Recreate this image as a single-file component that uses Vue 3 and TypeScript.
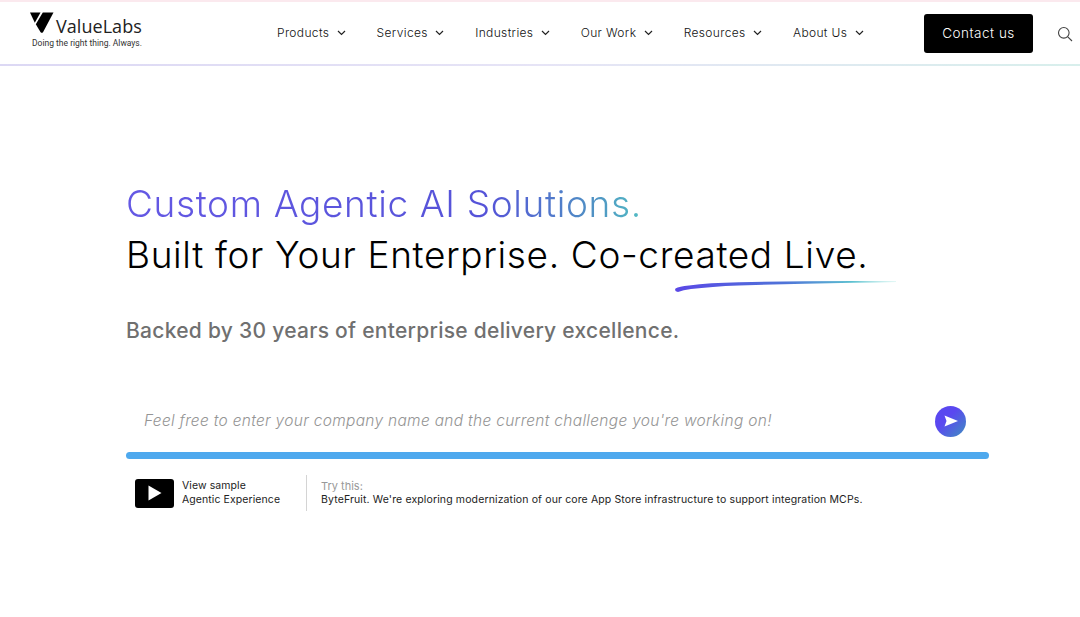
<script setup lang="ts">
const navItems = ["Products", "Services", "Industries", "Our Work", "Resources", "About Us"];
</script>

<template>
  <div class="page">
    <header class="header">
      <div class="logo">
        <div class="logo-top">
          <svg class="logo-mark" width="24" height="22" viewBox="0 0 24 22">
            <path d="M0 0.500H10.500L4.800 10.800z" fill="#000" />
            <path d="M12.800 0.500H23.500L13 20.200q-1.200 1.300-2.400 0L5.800 12.200z" fill="#000" />
          </svg>
          <span class="logo-name">ValueLabs</span>
        </div>
        <div class="logo-tag">Doing the right thing. Always.</div>
      </div>
      <nav class="nav">
        <a v-for="item in navItems" :key="item" class="nav-item">
          {{ item }}
          <svg width="9" height="6" viewBox="0 0 9 6"><path d="M1 1l3.500 3.500L8 1" fill="none" stroke="#222" stroke-width="1.200" /></svg>
        </a>
      </nav>
      <button class="contact">Contact us</button>
      <svg class="search" width="16" height="16" viewBox="0 0 16 16">
        <circle cx="6.800" cy="6.800" r="5.300" fill="none" stroke="#444" stroke-width="1.100" />
        <path d="M10.800 10.800l4.200 4.200" stroke="#444" stroke-width="1.100" />
      </svg>
    </header>

    <main class="hero">
      <h1 class="title">
        <span class="title-grad">Custom Agentic AI Solutions.</span>
        <span class="title-line">Built for Your Enterprise. Co-created
          Live.<svg class="swash" width="222" height="16" viewBox="0 0 222 16">
            <defs>
              <linearGradient id="sw" x1="0" x2="1" y1="0" y2="0">
                <stop offset="0" stop-color="#5a48e6" />
                <stop offset="0.5" stop-color="#4f74d8" />
                <stop offset="0.8" stop-color="#5cc0d0" />
                <stop offset="1" stop-color="#9fe6e0" stop-opacity="0.400" />
              </linearGradient>
            </defs>
            <path d="M0.500 9.500Q4 7.500 14 6.500Q34 3.800 64 3.200L130 2.200Q180 1.800 221 2.200L221 3Q180 3.800 130 4.800L64 6.400Q36 7.400 16 10Q8 11.200 3 13Q-1 12.500 0.500 9.500z" fill="url(#sw)" />
          </svg></span>
      </h1>
      <p class="sub">Backed by 30 years of enterprise delivery excellence.</p>

      <div class="prompt">
        <span class="placeholder">Feel free to enter your company name and the current challenge you're working on!</span>
        <button class="send" aria-label="Send">
          <svg width="14" height="12" viewBox="0 0 14 12"><path d="M0.500 0.500L14 6L0.500 11.500L2.500 6z" fill="#fff" /></svg>
        </button>
      </div>
      <div class="bar"></div>

      <div class="footer-row">
        <div class="sample">
          <span class="play">
            <svg width="14" height="16" viewBox="0 0 14 16"><path d="M0.500 0.500L13.500 8L0.500 15.500z" fill="#fff" /></svg>
          </span>
          <span class="sample-text">View sample<br />Agentic Experience</span>
        </div>
        <div class="try">
          <div class="try-label">Try this:</div>
          <div class="try-text">ByteFruit. We're exploring modernization of our core App Store infrastructure to support integration MCPs.</div>
        </div>
      </div>
    </main>
  </div>
</template>

<style>
html, body { margin: 0; background: #fff; }
</style>

<style scoped>
.page {
  width: 1080px;
  height: 617px;
  overflow: hidden;
  background: #fff;
  font-family: Inter, "Liberation Sans", sans-serif;
  color: #000;
}
.header {
  height: 64px;
  box-sizing: content-box;
  display: flex;
  align-items: center;
  padding: 0 0 0 30px;
  border-bottom: 2px solid;
  border-image: linear-gradient(90deg, #dcd8f4, #e6e4f6 50%, #d8efec) 1;
  background: linear-gradient(#fbe9ee, #fbe9ee) top / 100% 2px no-repeat #fff;
}
.logo { width: 247px; margin-top: -5px; }
.logo-top { display: flex; align-items: flex-end; height: 24px; }
.logo-mark { flex: none; }
.logo-name {
  font-family: "Open Sans", sans-serif;
  font-size: 18px;
  line-height: 20px;
  color: #222;
  margin-left: 2px;
  margin-bottom: -2px;
  letter-spacing: 0.050px;
}
.logo-tag {
  font-family: Roboto, sans-serif;
  font-size: 8.500px;
  line-height: 11px;
  margin: 4px 0 0 2px;
  color: #333;
}
.nav { display: flex; width: 647px; gap: 0; margin-top: 1px; }
.nav-item {
  display: flex;
  align-items: center;
  gap: 7.300px;
  font-size: 12px;
  font-weight: 300;
  letter-spacing: 0.36px;
  color: #111;
  margin-right: 31px;
  white-space: nowrap;
}
.contact {
  width: 109px;
  height: 39px;
  margin-top: 2px;
  background: #000;
  color: #fff;
  border: 0;
  border-radius: 3px;
  font-family: Inter, sans-serif;
  font-size: 13.500px;
  font-weight: 300;
  letter-spacing: 0.5px;
  flex: none;
}
.search { margin: 4px 0 0 24px; flex: none; }
.hero { padding: 112px 0 0 126px; width: 863px; }
.title {
  margin: 0;
  font-weight: 300;
  font-size: 37px;
  line-height: 51px;
  letter-spacing: 0.64px;
}
.title-grad {
  display: block;
  width: fit-content;
  background: linear-gradient(90deg, #6458e4, #5553d8 70%, #4f8fc4 90%, #52bcc4);
  -webkit-background-clip: text;
  background-clip: text;
  color: transparent;
}
.title-line { display: block; position: relative; width: fit-content; }
.swash { position: absolute; left: 549px; top: 50px; }
.sub {
  margin: 38px 0 0;
  font-size: 21px;
  line-height: 26px;
  font-weight: 500;
  letter-spacing: 0.28px;
  color: #707070;
}
.prompt {
  display: flex;
  align-items: center;
  justify-content: space-between;
  margin-top: 57px;
  padding: 0 23px 0 18px;
  height: 40px;
}
.placeholder {
  font-size: 15.500px;
  font-style: italic;
  font-weight: 300;
  letter-spacing: 0.3px;
  color: #959595;
  padding-bottom: 2px;
}
.send {
  width: 31px;
  height: 31px;
  padding: 0;
  border: 0;
  border-radius: 50%;
  background: linear-gradient(135deg, #5a48f0 40%, #3f8fc0);
  display: flex;
  align-items: center;
  justify-content: center;
}
.bar { height: 7px; margin-top: 11px; border-radius: 4px; background: #4ea9ee; }
.footer-row { display: flex; align-items: center; margin-top: 14px; height: 40px; }
.sample { display: flex; align-items: center; gap: 8px; margin-left: 9px; width: 171px; }
.play {
  width: 39px;
  height: 29px;
  background: #000;
  border-radius: 3px;
  display: flex;
  align-items: center;
  justify-content: center;
  flex: none;
}
.sample-text { font-size: 10.500px; line-height: 14px; letter-spacing: 0.08px; color: #222; white-space: nowrap; }
.try { border-left: 1px solid #d4d4d4; padding-left: 14px; height: 36px; }
.try-label { font-size: 11px; line-height: 14px; color: #999; margin-top: 4px; }
.try-text { font-size: 10.500px; line-height: 14px; letter-spacing: 0.13px; color: #222; white-space: nowrap; }
</style>
